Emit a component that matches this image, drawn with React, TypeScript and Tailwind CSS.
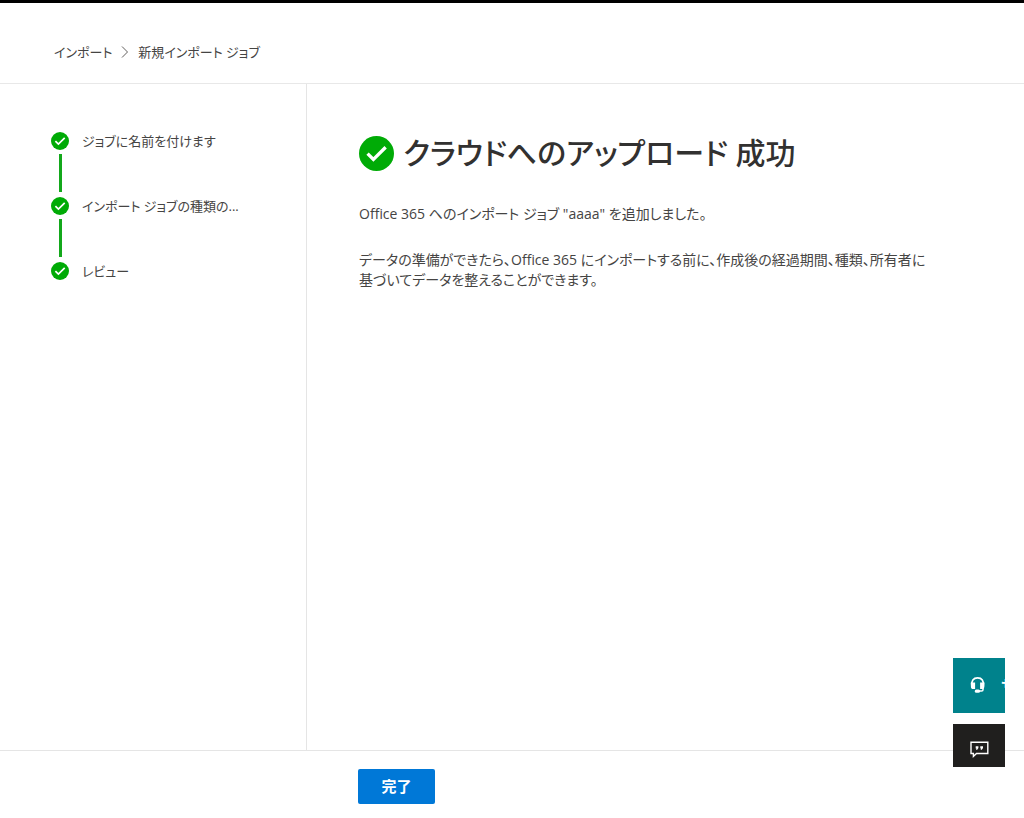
const steps = ['ジョブに名前を付けます', 'インポート ジョブの種類の...', 'レビュー'];

function CheckCircle({ className }: { className: string }) {
  return (
    <svg viewBox="0 0 36 36" className={className} aria-hidden="true">
      <circle cx="18" cy="18" r="18" fill="#00ab06" />
      <path d="M8.8 18.2l6 6L27.4 11.600" fill="none" stroke="#fff" strokeWidth="3.4" />
    </svg>
  );
}

function Breadcrumb() {
  return (
    <nav aria-label="階層" className="flex items-center gap-[7px] text-[13px] leading-5">
      <a href="#import">インポート</a>
      <svg viewBox="0 0 12 12" className="size-3" aria-hidden="true">
        <path d="M3 0.5L8.500 6L3 11.500" fill="none" stroke="#605e5c" strokeWidth="1" />
      </svg>
      <span aria-current="page">新規インポート ジョブ</span>
    </nav>
  );
}

function StepList() {
  return (
    <ol className="text-[13px] leading-5">
      {steps.map((label, index) => (
        <li key={label} className="flex gap-[13px]">
          <div className="flex flex-col items-center pt-px">
            <CheckCircle className="size-[18px]" />
            {index < steps.length - 1 && <span className="my-1 h-[38px] w-[3px] bg-[#13a81b]" />}
          </div>
          <span>{label}</span>
        </li>
      ))}
    </ol>
  );
}

function FloatingActions() {
  return (
    <div className="fixed right-[19px] bottom-[51px] flex w-[52px] flex-col gap-[11px]">
      <button
        type="button"
        className="flex h-[55px] items-center gap-[14px] overflow-hidden bg-[#00828c] pl-4 text-[15px] font-semibold whitespace-nowrap text-white"
      >
        <svg viewBox="0 0 18 18" className="size-[18px] shrink-0" aria-hidden="true">
          <path
            d="M2.900 9.500C2 3.500 4.500 0.900 8.600 0.900S15.200 3.500 14.300 9.500"
            fill="none"
            stroke="#fff"
            strokeWidth="1.700"
          />
          <path d="M1.900 5.500h4.200v6.600H4.300Q1.900 12.100 1.900 9.500zM15.300 5.500h-4.200v6.600h1.800q2.400 0 2.400-2.600z" fill="#fff" />
          <path d="M14 11v1.800q0 1.300-1.500 1.300H10" fill="none" stroke="#fff" strokeWidth="1.500" />
          <rect x="5.800" y="12.600" width="5.200" height="3.200" rx="1.500" fill="#fff" />
        </svg>
        <span>サポート</span>
      </button>
      <button
        type="button"
        aria-label="フィードバック"
        className="flex h-[43px] items-center bg-[#201f1e] pt-2 pl-[17px]"
      >
        <svg viewBox="0 0 19 17" className="h-[17px] w-[19px]" aria-hidden="true">
          <path d="M1 1.200h16.800v11.300H6.500L3.400 15.400v-2.900H1z" fill="none" stroke="#fff" strokeWidth="1.400" />
          <path d="M5.700 5.300h2.700v1.700L7.200 8.700H6l.4-1.300h-.7zM10.300 5.300H13v1.700l-1.200 1.700h-1.200l.4-1.300h-.7z" fill="#fff" />
        </svg>
      </button>
    </div>
  );
}

export default function App() {
  return (
    <div className="flex min-h-screen flex-col border-t-[3px] border-black bg-white font-['Open_Sans','Noto_Sans_CJK_JP',sans-serif] text-[#454443] [font-feature-settings:'palt']">
      <header className="flex h-[81px] items-center border-b border-[#e8e8e8] pt-[18px] pl-[54px]">
        <Breadcrumb />
      </header>
      <div className="flex flex-1">
        <aside className="w-[307px] shrink-0 border-r border-[#e5e5e5] pt-[47px] pl-[51px]">
          <StepList />
        </aside>
        <main className="min-w-0 flex-1 pt-[45px] pr-[88px] pl-[52px]">
          <h1 className="flex items-center gap-[9px] text-[30px] leading-12 font-medium text-[#323130]">
            <CheckCircle className="size-[35px] shrink-0" />
            クラウドへのアップロード 成功
          </h1>
          <div className="mt-[27px] space-y-[26px] text-[14px] leading-5">
            <p>Office 365 へのインポート ジョブ "aaaa" を追加しました。</p>
            <p>
              データの準備ができたら、Office 365
              にインポートする前に、作成後の経過期間、種類、所有者に基づいてデータを整えることができます。
            </p>
          </div>
        </main>
      </div>
      <footer className="flex h-[68px] items-center border-t border-[#e5e5e5] pt-1 pl-[358px]">
        <button type="button" className="h-[35px] w-[77px] rounded-xs bg-[#0078d7] text-[15px] font-semibold text-white">
          完了
        </button>
      </footer>
      <FloatingActions />
    </div>
  );
}
